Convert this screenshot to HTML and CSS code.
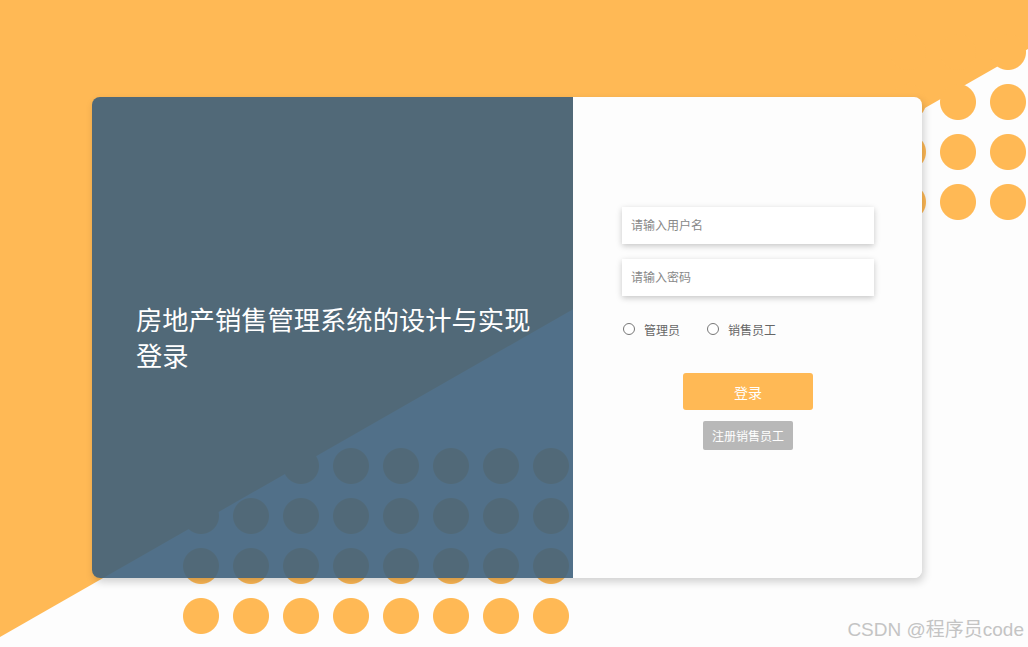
FILE: index.html
```html
<!DOCTYPE html>
<html lang="zh-CN">
<head>
	<meta charset="UTF-8">
	<title>房地产销售管理系统 - 登录</title>
	<link rel="stylesheet" href="styles.css">
</head>
<body>
	<!-- 背景：橙色底 + 白色斜切 + 圆点 -->
	<div class="bg-white"></div>
	<div class="dots dots-top"></div>
	<div class="dots dots-bottom"></div>

	<div class="login-box">
		<div class="login-left">
			<h1>房地产销售管理系统的设计与实现登录</h1>
		</div>
		<div class="login-right">
			<form class="login-form" onsubmit="return false;">
				<input type="text" class="ipt" placeholder="请输入用户名">
				<input type="password" class="ipt" placeholder="请输入密码">
				<div class="roles">
					<label><input type="radio" name="role"><span>管理员</span></label>
					<label><input type="radio" name="role"><span>销售员工</span></label>
				</div>
				<button class="btn-login">登录</button>
				<button class="btn-reg">注册销售员工</button>
			</form>
		</div>
	</div>

	<div class="mark">CSDN @程序员code</div>
</body>
</html>
```

FILE: styles.css
```css
*{box-sizing:border-box;}
html,body{margin:0;padding:0;height:100%;}
body{position:relative;overflow:hidden;background:#ffb955;font-family:"Liberation Sans","Noto Sans CJK SC",sans-serif;}

.bg-white{position:absolute;left:0;top:0;width:100%;height:100%;background:#fdfdfd;clip-path:polygon(0 637px,1028px 49px,100% 100%,0 100%);}
.dots{position:absolute;background:radial-gradient(circle at 25px 25px,#ffb955 17.5px,rgba(255,185,85,0) 18.5px) 0 0/50px 50px;}
.dots-top{left:883px;top:27px;width:150px;height:200px;}
.dots-bottom{left:176px;top:441px;width:400px;height:200px;}

.login-box{position:relative;z-index:1;display:flex;width:830px;height:481px;margin:97px 0 0 92px;border-radius:8px;box-shadow:2px 4px 8px rgba(0,0,0,.18);}
.login-left{display:flex;align-items:center;width:481px;padding:0 42px 0 44px;border-radius:8px 0 0 8px;background:rgba(62,96,124,.9);}
.login-left h1{margin:0;padding-top:2px;font-size:26.3px;font-weight:normal;line-height:36px;color:#fff;}
.login-right{flex:1;padding:110px 48px 0 49px;border-radius:0 8px 8px 0;background:#fdfdfd;}

.login-form{display:flex;flex-direction:column;align-items:center;}
.ipt{display:block;width:252px;height:37px;margin:0 0 15px;padding:0 9px;border:0;outline:none;background:#fff;box-shadow:0 2px 6px rgba(0,0,0,.22);font-size:12px;font-family:inherit;color:#333;}
.ipt::placeholder{color:#888;}
.roles{display:flex;align-self:flex-start;gap:26px;margin:8px 0 0;height:54px;}
.roles label{display:flex;align-items:center;height:20px;font-size:12px;color:#666;}
.roles input{width:12px;height:12px;margin:0 9px 0 1px;}
.btn-login{width:130px;height:37px;margin:0;border:0;border-radius:3px;background:#ffb955;color:#fff;font-size:14px;font-family:inherit;}
.btn-reg{width:90px;height:29px;margin:11px 0 0;padding:0;border:0;border-radius:2px;background:#b8b8b8;color:#fff;font-size:12px;font-family:inherit;}

.mark{position:absolute;right:4px;bottom:6px;font-size:19px;color:#c4c4c4;}
```
